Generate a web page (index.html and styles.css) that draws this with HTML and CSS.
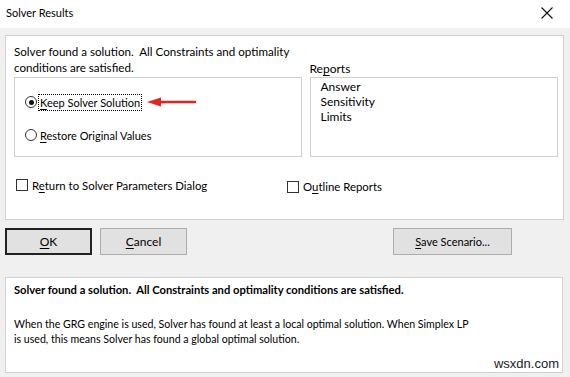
FILE: index.html
```html
<!DOCTYPE html>
<html>
<head>
<meta charset="utf-8">
<link rel="stylesheet" href="styles.css">
</head>
<body>
<div class="dialog">
  <div class="titlebar">
    <span class="title">Solver Results</span>
    <svg class="close" width="12" height="12" viewBox="0 0 12 12"><path d="M0.5 0.5 L11.5 11.5 M11.5 0.5 L0.5 11.5" stroke="#111" stroke-width="1.1" fill="none"/></svg>
  </div>
  <div class="content">
    <div class="panel top">
      <div class="cols">
        <div class="col-left">
          <p class="msg">Solver found a solution.&nbsp; All Constraints and optimality<br>conditions are satisfied.</p>
          <div class="group">
            <div class="opt first">
              <span class="radio checked"></span>
              <span class="lbl focus"><u>K</u>eep Solver Solution</span>
              <svg class="arrow" width="50" height="10" viewBox="0 0 50 10"><path d="M12 5 H49" stroke="#e52420" stroke-width="2.4"/><path d="M0 5 L14 0.5 L14 9.5 Z" fill="#e52420"/></svg>
            </div>
            <div class="opt">
              <span class="radio"></span>
              <span class="lbl"><u>R</u>estore Original Values</span>
            </div>
          </div>
        </div>
        <div class="col-right">
          <div class="rep-label">Re<u>p</u>orts</div>
          <div class="listbox">
            <div>Answer</div>
            <div>Sensitivity</div>
            <div>Limits</div>
          </div>
        </div>
      </div>
      <div class="checks">
        <div class="chk left"><span class="box"></span><span>R<u>e</u>turn to Solver Parameters Dialog</span></div>
        <div class="chk right"><span class="box"></span><span>O<u>u</u>tline Reports</span></div>
      </div>
    </div>
    <div class="buttons">
      <button class="btn default"><u>O</u>K</button>
      <button class="btn"><u>C</u>ancel</button>
      <span class="spacer"></span>
      <button class="btn wide"><u>S</u>ave Scenario...</button>
    </div>
    <div class="panel bottom">
      <p class="bold">Solver found a solution.&nbsp; All Constraints and optimality conditions are satisfied.</p>
      <p class="desc">When the GRG engine is used, Solver has found at least a local optimal solution. When Simplex LP<br>is used, this means Solver has found a global optimal solution.</p>
      <div class="watermark">wsxdn.com</div>
    </div>
  </div>
</div>
</body>
</html>
```
FILE: styles.css
```css
* { box-sizing: border-box; }
html, body { margin: 0; padding: 0; }
body {
  width: 570px;
  height: 377px;
  overflow: hidden;
  background: #f0f0f0;
  font-family: Lato, "Noto Sans", sans-serif;
  font-size: 12px;
  color: #000;
}
u { text-decoration: underline; text-underline-offset: 2px; }
.titlebar {
  height: 28px;
  background: #fff;
  display: flex;
  align-items: center;
  justify-content: space-between;
  padding: 0 17px 0 6px;
}
.title { font-size: 11px; line-height: 16px; margin-top: -3px; }
.close { margin-top: -3px; }
.content { padding: 7px 6px 0 5px; }
.panel {
  background: #fff;
  border: 1px solid #cfcfcf;
}
.panel.top { height: 185px; padding: 8px 5px 0 8px; }
.cols { display: flex; gap: 8px; align-items: flex-end; }
.col-left { width: 289px; }
.msg { margin: 0 0 1px 0; font-size: 11.6px; line-height: 16px; white-space: nowrap; }
.group {
  height: 80px;
  border: 1px solid #cfcfcf;
  padding: 15px 0 0 10px;
}
.opt { display: flex; align-items: center; height: 18px; font-size: 11px; }
.opt + .opt { margin-top: 15px; }
.radio {
  width: 12px; height: 12px;
  border: 1px solid #333;
  border-radius: 50%;
  background: #fff;
  position: relative;
  flex: none;
}
.radio.checked::after {
  content: "";
  position: absolute;
  left: 2.5px; top: 2.5px;
  width: 5px; height: 5px;
  border-radius: 50%;
  background: #111;
}
.lbl { margin-left: 2px; padding: 0 1px; line-height: 15px; white-space: nowrap; }
.lbl.focus { outline: 1px dotted #000; }
.arrow { margin-left: 6px; }
.col-right { width: 248px; }
.rep-label { line-height: 16px; margin-left: -1px; }
.listbox {
  height: 80px;
  border: 1px solid #cfcfcf;
  padding: 1px 0 0 9px;
  line-height: 15px;
}
.checks { display: flex; margin-top: 20px; font-size: 11.4px; }
.chk { display: flex; align-items: center; white-space: nowrap; }
.chk .box {
  width: 12px; height: 12px;
  border: 1px solid #333;
  background: #fff;
  margin-right: 4px;
  flex: none;
}
.chk.left { width: 271px; margin-left: 2px; }
.chk.right { margin-top: 3px; }
.buttons { display: flex; margin-top: 8px; gap: 8px; height: 28px; }
.spacer { flex: 1; }
.btn {
  font-family: inherit;
  font-size: 12px;
  width: 87px;
  height: 27px;
  background: #e1e1e1;
  border: 1px solid #adadad;
  padding: 0;
  color: #000;
}
.btn.default { border: 2px solid #222; }
.btn.wide { width: 119px; margin-right: 52px; font-size: 11px; }
.panel.bottom {
  margin-top: 21px;
  width: 558px;
  height: 96px;
  padding: 4px 8px 0 8px;
  position: relative;
}
.bold { margin: 0; font-weight: bold; font-size: 11.2px; line-height: 16px; }
.desc { margin: 19px 0 0 0; font-size: 10.6px; line-height: 15px; white-space: nowrap; }
.watermark {
  position: absolute;
  right: 3px; bottom: 1px;
  font-family: "Liberation Sans", Arial, sans-serif;
  font-size: 13px;
  color: #222;
}
```
